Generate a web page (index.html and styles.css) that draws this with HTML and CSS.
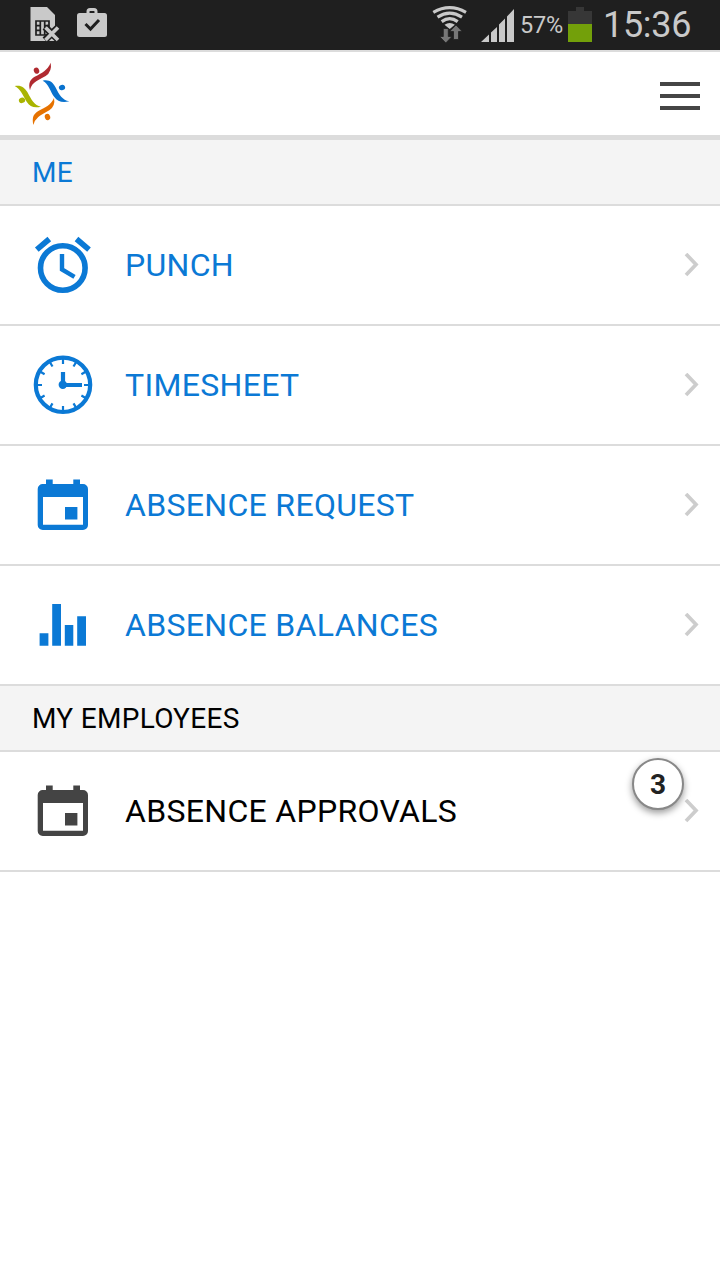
FILE: index.html
```html
<!DOCTYPE html>
<html lang="en">
<head>
    <meta charset="UTF-8">
    <meta name="viewport" content="width=device-width, initial-scale=1.0">
    <title>Absence Management</title>
    <link rel="stylesheet" href="styles.css">
</head>
<body>

    <svg class="sprite" aria-hidden="true">
        <symbol id="calendar" viewBox="0 0 60 60">
            <path fill="currentColor" fill-rule="evenodd" d="M13 9V4.500h6.700V9h20.600V4.500H47V9h3a5 5 0 0 1 5 5v36a5 5 0 0 1-5 5H9.700a5 5 0 0 1-5-5V14a5 5 0 0 1 5-5zM10 22v27.700h40V22zM32 32h12.400v12.400H32z"/>
        </symbol>
        <symbol id="chevron" viewBox="0 0 16 24">
            <path fill="none" stroke="#cdcdcd" stroke-width="3.700" d="M2 1L12 11.500L2 22"/>
        </symbol>
    </svg>

    <div class="status-bar">
        <svg class="notices" viewBox="0 0 90 50">
            <path fill="#c9c9c9" d="M0.500 7H17l8 8v26H0.500z"/>
            <path fill="none" stroke="#1f1f1f" stroke-width="1.700" d="M6 21h13v14H6zM10.300 21v14M14.700 21v14M6 25.600h4.300M6 30.400h4.300M14.700 25.600H19"/>
            <path stroke="#1f1f1f" stroke-width="7" d="M15 27l13.500 13M28.500 27L15 40"/>
            <path stroke="#c9c9c9" stroke-width="3.600" d="M15.500 27.500l12.500 12.500M28 27.500L15.500 40"/>
            <path fill="none" stroke="#c9c9c9" stroke-width="3" d="M58 14v-2.500q0-2 2-2h4q2 0 2 2V14"/>
            <rect x="47" y="13" width="30" height="24" rx="2.500" fill="#c9c9c9"/>
            <path fill="none" stroke="#1f1f1f" stroke-width="3" d="M55.500 24l5 5 8.500-9"/>
        </svg>
        <div class="indicators">
            <svg class="network" viewBox="0 0 84 50">
                <g fill="none" stroke="#c9c9c9" stroke-width="3.200">
                    <path d="M1.300 12.300Q17.700 3 34 12.300"/>
                    <path d="M5.500 17.200Q17.700 9.200 30 17.200"/>
                    <path d="M9.700 21.600Q17.700 15.600 25.700 21.600"/>
                </g>
                <path fill="#c9c9c9" d="M12.500 24.800q5.200-3.600 10.400 0L17.700 29z"/>
                <path fill="#777" stroke="#1f1f1f" stroke-width=".8" d="M11.300 28.500h5v8h3.700L13.800 43l-6.200-6.500h3.700zM21.500 39.500v-8h-3.800L24 25l6.200 6.500h-3.700v8z"/>
                <path fill="#c9c9c9" d="M49 42l8-7.500V42zM59 42V32.500l6-5.500v15zM67 42V24.500l6-6V42zM75 42V16.500L82 9v33z"/>
            </svg>
            <span class="percent">57%</span>
            <span class="battery"></span>
            <span class="time">15:36</span>
        </div>
    </div>

    <header class="header">
        <svg class="logo" viewBox="36 36 180 192">
            <path fill="#b02a30" d="M152 38Q157 64 137 78Q113 90 103 98Q92 107 90 121C84 98 91 88 104 80C126 69 142 61 152 38z"/>
            <ellipse cx="109.500" cy="62" rx="8" ry="9.500" transform="rotate(-20 109.500 62)" fill="#b02a30"/>
            <path fill="#0972ce" d="M128 92C148 88 158 97 166 111C178 135 187 150 208 154C186 160 173 154 163 141C151 125 146 101 128 92z"/>
            <ellipse cx="186" cy="112.500" rx="9.500" ry="8" transform="rotate(-20 186 112.500)" fill="#0972ce"/>
            <path fill="#a9b400" d="M44 108C63 104 73 112 82 126C94 149 103 166 123 170C102 175 90 170 80 155C69 137 61 116 44 108z"/>
            <ellipse cx="66" cy="151" rx="9.500" ry="8" transform="rotate(-20 66 151)" fill="#a9b400"/>
            <path fill="#e67200" d="M162 144Q167 168 148 181Q125 193 115 201Q104 210 100 225C95 200 102 191 115 183C138 171 152 165 162 144z"/>
            <ellipse cx="142.500" cy="201" rx="8" ry="9.500" transform="rotate(-20 142.500 201)" fill="#e67200"/>
        </svg>
        <div class="menu-btn">
            <span></span>
            <span></span>
            <span></span>
        </div>
    </header>

    <h2 class="section blue">ME</h2>

    <div class="row blue">
        <svg class="icon" viewBox="0 0 60 60" fill="none" stroke="currentColor">
            <circle cx="29.800" cy="33" r="22.300" stroke-width="5.600"/>
            <path stroke-width="4.400" d="M29 19v15.500l12.500 7.300"/>
            <path stroke-width="5.600" d="M3.800 14.700L16.300 4M43.500 4L56 14.700"/>
        </svg>
        <span class="label">PUNCH</span>
        <svg class="chevron"><use href="#chevron"/></svg>
    </div>

    <div class="row blue">
        <svg class="icon" viewBox="0 0 60 60" fill="none" stroke="currentColor">
            <circle cx="30" cy="29.800" r="27.200" stroke-width="4.200"/>
            <circle cx="29.800" cy="29.800" r="4.200" fill="currentColor" stroke="none"/>
            <path stroke-width="4.200" d="M30 17v13h19"/>
            <path stroke-width="2.200" d="M30 3v6M30 51v6M3 30h6M51 30h6M16.500 6.500l3 5M40.500 48.400l3 5M6.600 16.300l5 3M48.400 40.500l5 3M43.500 6.500l-3 5M19.500 48.400l-3 5M53.400 16.300l-5 3M11.600 40.500l-5 3"/>
        </svg>
        <span class="label">TIMESHEET</span>
        <svg class="chevron"><use href="#chevron"/></svg>
    </div>

    <div class="row blue">
        <svg class="icon"><use href="#calendar"/></svg>
        <span class="label">ABSENCE REQUEST</span>
        <svg class="chevron"><use href="#chevron"/></svg>
    </div>

    <div class="row blue">
        <svg class="icon" viewBox="0 0 60 60">
            <path fill="currentColor" d="M6.600 38.200h8.800v12.600H6.600zM19.200 9H28v41.800h-8.800zM31.800 30h8.500v20.800h-8.500zM44.200 21.300H53v29.500h-8.800z"/>
        </svg>
        <span class="label">ABSENCE BALANCES</span>
        <svg class="chevron"><use href="#chevron"/></svg>
    </div>

    <h2 class="section">MY EMPLOYEES</h2>

    <div class="row">
        <svg class="icon dark"><use href="#calendar"/></svg>
        <span class="label">ABSENCE APPROVALS</span>
        <span class="badge">3</span>
        <svg class="chevron"><use href="#chevron"/></svg>
    </div>

</body>
</html>
```
FILE: styles.css
```css
* {
    box-sizing: border-box;
}

body {
    font-family: Roboto, sans-serif;
    background: white;
    color: black;
    margin: 0;
}

.sprite {
    display: none;
}

.status-bar {
    display: flex;
    justify-content: space-between;
    height: 50px;
    padding: 0 28px 0 30px;
    background: #1f1f1f;
    color: #c9c9c9;
}

.notices {
    width: 90px;
    height: 50px;
}

.indicators {
    display: flex;
    align-items: center;
}

.network {
    width: 84px;
    height: 50px;
    margin-right: 4px;
}

.percent {
    width: 48px;
    font-size: 23.5px;
    letter-spacing: -0.2px;
    white-space: nowrap;
}

.battery {
    width: 24px;
    height: 36px;
    margin-right: 11px;
    background:
        linear-gradient(#73a00a, #73a00a) 0 17px / 24px 18px no-repeat,
        linear-gradient(#373737, #373737) 0 4px / 24px 13px no-repeat,
        linear-gradient(#373737, #373737) 8px 0 / 8px 4px no-repeat;
}

.time {
    width: 89px;
    font-size: 36px;
    letter-spacing: -0.3px;
    line-height: 48px;
    white-space: nowrap;
}

.header {
    display: flex;
    justify-content: space-between;
    height: 90px;
    padding: 10px 20px 0 12px;
    border-top: 2px solid #dcdcdc;
    border-bottom: 5px solid #dcdcdc;
}

.logo {
    width: 60px;
    height: 64px;
}

.menu-btn {
    display: flex;
    flex-direction: column;
    gap: 8px;
    width: 40px;
    padding-top: 20px;
}

.menu-btn span {
    height: 4px;
    background: #454545;
}

.section {
    height: 66px;
    margin: 0;
    padding-left: 32px;
    background: #f4f4f4;
    border-bottom: 2px solid #dcdcdc;
    font-size: 28px;
    font-weight: normal;
    letter-spacing: 0.3px;
    line-height: 65px;
}

.row {
    display: flex;
    align-items: center;
    position: relative;
    height: 120px;
    padding: 0 20px 0 33px;
    border-bottom: 2px solid #dcdcdc;
}

.blue {
    color: #0b79d5;
}

.icon {
    width: 60px;
    height: 60px;
    margin-right: 32px;
}

.dark {
    color: #444;
}

.label {
    flex: 1;
    font-size: 32px;
    letter-spacing: 0.32px;
}

.chevron {
    width: 16px;
    height: 24px;
}

.badge {
    position: absolute;
    top: 6px;
    right: 36px;
    width: 52px;
    height: 52px;
    border: 2px solid #888;
    border-radius: 50%;
    background: white;
    box-shadow: 0 3px 7px rgba(0, 0, 0, 0.4);
    color: #222;
    font-size: 28px;
    font-weight: bold;
    line-height: 49px;
    text-align: center;
}
```
